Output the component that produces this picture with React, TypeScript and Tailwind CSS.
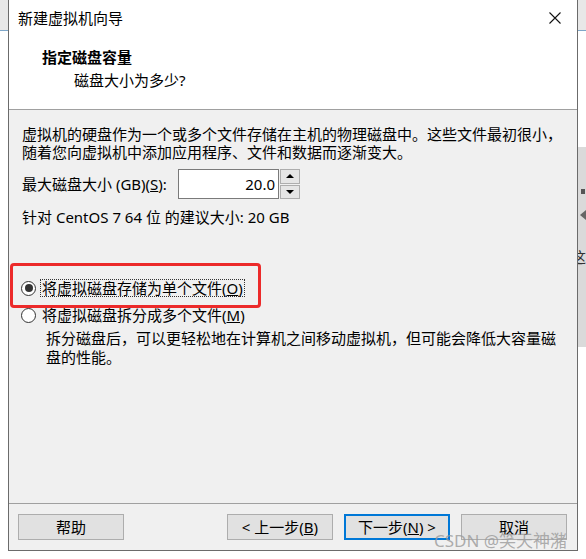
import React from "react";

const FONT = {
  fontFamily: '"Noto Sans", "Noto Sans CJK SC", sans-serif',
};

function Radio({ checked }: { checked?: boolean }) {
  return (
    <span className="flex h-[15px] w-[15px] shrink-0 items-center justify-center rounded-full border border-[#333] bg-white">
      {checked && <span className="h-[8px] w-[8px] rounded-full bg-[#333]" />}
    </span>
  );
}

function DlgButton({ children, primary }: { children: React.ReactNode; primary?: boolean }) {
  return (
    <button
      className={
        "flex h-[26px] w-[106px] items-center justify-center bg-[#e1e1e1] text-[15px] leading-none text-black " +
        (primary ? "border-2 border-[#0078d7]" : "border border-[#adadad]")
      }
    >
      {children}
    </button>
  );
}

export default function App() {
  return (
    <div className="relative h-[559px] w-[586px] overflow-hidden bg-white text-black" style={FONT}>
      {/* desktop behind the dialog */}
      <div className="h-[31px] border-b border-[#7ea6c8] bg-[#e8e8e8]" />
      <div className="absolute right-0 top-[147px] flex h-[200px] w-[9px] flex-col items-end bg-[#dadada] pt-[42px]">
        <span className="mr-[1px] h-[5px] w-[4px] bg-[#555]" />
        <span className="mt-[16px] h-0 w-0 border-y-[5px] border-r-[6px] border-y-transparent border-r-[#666]" />
        <span className="mt-[30px] text-[15px] leading-none text-[#333]">这</span>
      </div>

      {/* wizard window */}
      <div className="absolute left-[8px] top-0 flex h-[551px] w-[570px] flex-col border border-t-0 border-[#6b6b6b] bg-[#f0f0f0]">
        {/* title bar */}
        <div className="flex h-[36px] items-center justify-between bg-white pl-[9px] pr-[16px]">
          <span className="text-[15px] leading-none">新建虚拟机向导</span>
          <svg width="12" height="12" viewBox="0 0 12 12">
            <path d="M0.5 0.5 L11.5 11.5 M11.5 0.5 L0.5 11.5" stroke="#111" strokeWidth="1.1" />
          </svg>
        </div>

        {/* header */}
        <div className="flex h-[74px] flex-col border-b border-[#a0a0a0] bg-white pl-[33px] pt-[11px]">
          <span className="text-[15px] font-bold leading-[20px]">指定磁盘容量</span>
          <span className="pl-[32px] pt-[3px] text-[15px] leading-[20px]">磁盘大小为多少?</span>
        </div>

        {/* body */}
        <div className="flex flex-1 flex-col pl-[13px] pt-[15px] text-[15px]">
          <div className="leading-[18px]">
            <div>虚拟机的硬盘作为一个或多个文件存储在主机的物理磁盘中。这些文件最初很小，</div>
            <div>随着您向虚拟机中添加应用程序、文件和数据而逐渐变大。</div>
          </div>

          <div className="mt-[8px] flex h-[30px] items-center">
            <span className="w-[156px] leading-none">
              最大磁盘大小 (GB)(<span className="underline">S</span>):
            </span>
            <div className="flex h-[30px] w-[101px] items-center justify-end border border-[#7a7a7a] bg-white pr-[3px] leading-none">
              20.0
            </div>
            <div className="ml-[1px] flex h-[30px] w-[20px] flex-col gap-[1px]">
              <div className="flex flex-1 items-center justify-center border border-[#adadad] bg-[#e5e5e5]">
                <span className="h-0 w-0 border-x-[4px] border-b-[4px] border-x-transparent border-b-black" />
              </div>
              <div className="flex flex-1 items-center justify-center border border-[#adadad] bg-[#e5e5e5]">
                <span className="h-0 w-0 border-x-[4px] border-t-[4px] border-x-transparent border-t-black" />
              </div>
            </div>
          </div>

          <div className="mt-[9px] leading-[18px]">针对 CentOS 7 64 位 的建议大小: 20 GB</div>

          {/* storage options */}
          <div className="ml-[-1px] mt-[53px] flex h-[18px] items-center gap-[4px]">
            <Radio checked />
            <span className="border border-dotted border-[#333] px-[1px] leading-[16px]">
              将虚拟磁盘存储为单个文件(<span className="underline">O</span>)
            </span>
          </div>
          <div className="ml-[-1px] mt-[9px] flex h-[18px] items-center gap-[6px]">
            <Radio />
            <span className="leading-[16px]">
              将虚拟磁盘拆分成多个文件(<span className="underline">M</span>)
            </span>
          </div>
          <div className="mt-[5px] pl-[24px] leading-[19px]">
            <div>拆分磁盘后，可以更轻松地在计算机之间移动虚拟机，但可能会降低大容量磁</div>
            <div>盘的性能。</div>
          </div>
        </div>

        {/* footer */}
        <div className="flex h-[47px] items-start justify-between border-t border-[#a0a0a0] pl-[9px] pr-[10px] pt-[10px]">
          <DlgButton>帮助</DlgButton>
          <div className="flex gap-[11px]">
            <DlgButton>
              &lt; 上一步(<span className="underline">B</span>)
            </DlgButton>
            <DlgButton primary>
              下一步(<span className="underline">N</span>) &gt;
            </DlgButton>
            <DlgButton>取消</DlgButton>
          </div>
        </div>
      </div>

      {/* highlight */}
      <div className="absolute left-[10px] top-[263px] h-[45px] w-[251px] rounded-[4px] border-[3px] border-[#ec2a2a]" />

      {/* watermark */}
      <span className="absolute left-[434px] top-[530px] text-[17px] leading-[22px] text-[#9a9a9a]/80">
        CSDN @笑天神潴
      </span>
    </div>
  );
}
